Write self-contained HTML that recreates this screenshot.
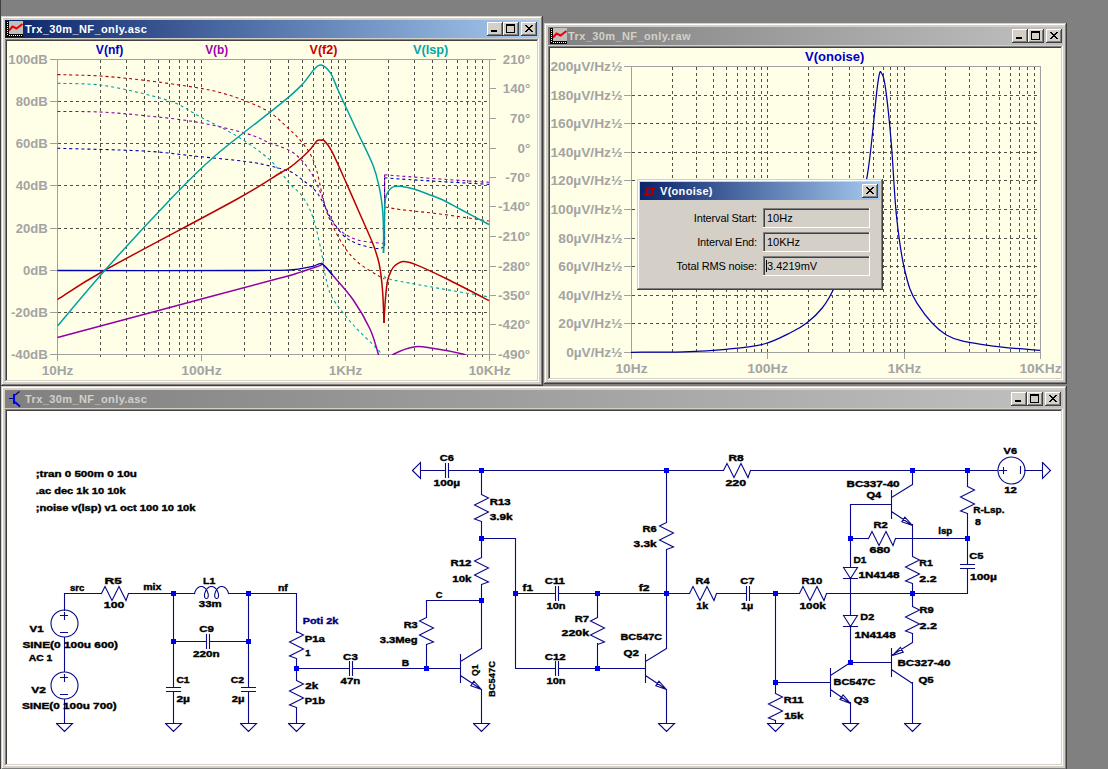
<!DOCTYPE html>
<html><head><meta charset="utf-8"><style>
html,body{margin:0;padding:0;width:1108px;height:769px;overflow:hidden;background:#808080}
svg{display:block}
</style></head><body>
<svg width="1108" height="769" viewBox="0 0 1108 769" shape-rendering="crispEdges">
<rect x="0" y="0" width="1108" height="769" fill="#808080" />
<rect x="0" y="0" width="1" height="769" fill="#404040" />
<rect x="1" y="16" width="542" height="370" fill="#D4D0C8" />
<rect x="1" y="385" width="542" height="1" fill="#404040" />
<rect x="542" y="16" width="1" height="370" fill="#404040" />
<rect x="2" y="384" width="540" height="1" fill="#808080" />
<rect x="541" y="17" width="1" height="368" fill="#808080" />
<rect x="2" y="17" width="539" height="1" fill="#FFFFFF" />
<rect x="2" y="17" width="1" height="367" fill="#FFFFFF" />
<rect x="1" y="16" width="541" height="1" fill="#D4D0C8" />
<rect x="1" y="16" width="1" height="369" fill="#D4D0C8" />
<defs><linearGradient id="g1" x1="0" x2="1" y1="0" y2="0"><stop offset="0" stop-color="#0A246A"/><stop offset="1" stop-color="#A6CAF0"/></linearGradient></defs>
<rect x="5" y="20" width="534" height="18" fill="url(#g1)" />
<rect x="9" y="21" width="14" height="13" fill="#C0C0C0" />
<rect x="6" y="21" width="3" height="16" fill="#000" />
<rect x="6" y="34" width="17" height="3" fill="#000" />
<rect x="7" y="22" width="1" height="1" fill="#FFF" />
<rect x="7" y="24" width="1" height="1" fill="#FFF" />
<rect x="7" y="26" width="1" height="1" fill="#FFF" />
<rect x="7" y="28" width="1" height="1" fill="#FFF" />
<rect x="7" y="30" width="1" height="1" fill="#FFF" />
<rect x="7" y="32" width="1" height="1" fill="#FFF" />
<rect x="7" y="34" width="1" height="1" fill="#FFF" />
<rect x="9" y="35" width="1" height="1" fill="#FFF" />
<rect x="11" y="35" width="1" height="1" fill="#FFF" />
<rect x="13" y="35" width="1" height="1" fill="#FFF" />
<rect x="15" y="35" width="1" height="1" fill="#FFF" />
<rect x="17" y="35" width="1" height="1" fill="#FFF" />
<rect x="19" y="35" width="1" height="1" fill="#FFF" />
<rect x="21" y="35" width="1" height="1" fill="#FFF" />
<path d="M9 30.5 L12.5 26.5 L16.5 28.5 L22.5 24" stroke="#F00000" stroke-width="2" fill="none" shape-rendering="auto"/>
<text x="25" y="33" fill="#FFFFFF" style='font-family:"Liberation Sans",sans-serif;font-weight:bold;font-size:11px;letter-spacing:0.4px'>Trx_30m_NF_only.asc</text>
<rect x="487" y="22" width="16" height="14" fill="#D4D0C8" />
<rect x="487" y="35" width="16" height="1" fill="#404040" />
<rect x="502" y="22" width="1" height="14" fill="#404040" />
<rect x="488" y="34" width="14" height="1" fill="#808080" />
<rect x="501" y="23" width="1" height="12" fill="#808080" />
<rect x="487" y="22" width="15" height="1" fill="#FFFFFF" />
<rect x="487" y="22" width="1" height="13" fill="#FFFFFF" />
<rect x="491" y="30" width="6" height="2" fill="#000" />
<rect x="503" y="22" width="16" height="14" fill="#D4D0C8" />
<rect x="503" y="35" width="16" height="1" fill="#404040" />
<rect x="518" y="22" width="1" height="14" fill="#404040" />
<rect x="504" y="34" width="14" height="1" fill="#808080" />
<rect x="517" y="23" width="1" height="12" fill="#808080" />
<rect x="503" y="22" width="15" height="1" fill="#FFFFFF" />
<rect x="503" y="22" width="1" height="13" fill="#FFFFFF" />
<rect x="506.5" y="24.5" width="8" height="8" fill="none" stroke="#000" stroke-width="1"/>
<rect x="506" y="24" width="9" height="2" fill="#000" />
<rect x="521" y="22" width="16" height="14" fill="#D4D0C8" />
<rect x="521" y="35" width="16" height="1" fill="#404040" />
<rect x="536" y="22" width="1" height="14" fill="#404040" />
<rect x="522" y="34" width="14" height="1" fill="#808080" />
<rect x="535" y="23" width="1" height="12" fill="#808080" />
<rect x="521" y="22" width="15" height="1" fill="#FFFFFF" />
<rect x="521" y="22" width="1" height="13" fill="#FFFFFF" />
<rect x="525" y="25" width="2" height="1" fill="#000" />
<rect x="531" y="25" width="2" height="1" fill="#000" />
<rect x="526" y="26" width="2" height="1" fill="#000" />
<rect x="530" y="26" width="2" height="1" fill="#000" />
<rect x="527" y="27" width="2" height="1" fill="#000" />
<rect x="529" y="27" width="2" height="1" fill="#000" />
<rect x="528" y="28" width="2" height="1" fill="#000" />
<rect x="528" y="28" width="2" height="1" fill="#000" />
<rect x="529" y="29" width="2" height="1" fill="#000" />
<rect x="527" y="29" width="2" height="1" fill="#000" />
<rect x="530" y="30" width="2" height="1" fill="#000" />
<rect x="526" y="30" width="2" height="1" fill="#000" />
<rect x="531" y="31" width="2" height="1" fill="#000" />
<rect x="525" y="31" width="2" height="1" fill="#000" />
<rect x="5" y="39" width="534" height="343" fill="#FFFFE8" />
<rect x="5" y="39" width="534" height="1" fill="#808080" />
<rect x="5" y="39" width="1" height="343" fill="#808080" />
<rect x="6" y="40" width="532" height="1" fill="#404040" />
<rect x="6" y="40" width="1" height="341" fill="#404040" />
<rect x="5" y="381" width="534" height="1" fill="#FFFFFF" />
<rect x="538" y="39" width="1" height="343" fill="#FFFFFF" />
<rect x="6" y="380" width="532" height="1" fill="#D4D0C8" />
<rect x="537" y="40" width="1" height="341" fill="#D4D0C8" />
<rect x="544" y="23" width="523" height="361" fill="#D4D0C8" />
<rect x="544" y="383" width="523" height="1" fill="#404040" />
<rect x="1066" y="23" width="1" height="361" fill="#404040" />
<rect x="545" y="382" width="521" height="1" fill="#808080" />
<rect x="1065" y="24" width="1" height="359" fill="#808080" />
<rect x="545" y="24" width="520" height="1" fill="#FFFFFF" />
<rect x="545" y="24" width="1" height="358" fill="#FFFFFF" />
<rect x="544" y="23" width="522" height="1" fill="#D4D0C8" />
<rect x="544" y="23" width="1" height="360" fill="#D4D0C8" />
<defs><linearGradient id="g2" x1="0" x2="1" y1="0" y2="0"><stop offset="0" stop-color="#808080"/><stop offset="1" stop-color="#C0C0C0"/></linearGradient></defs>
<rect x="548" y="27" width="515" height="18" fill="url(#g2)" />
<rect x="553" y="28" width="14" height="13" fill="#C0C0C0" />
<rect x="550" y="28" width="3" height="16" fill="#000" />
<rect x="550" y="41" width="17" height="3" fill="#000" />
<rect x="551" y="29" width="1" height="1" fill="#FFF" />
<rect x="551" y="31" width="1" height="1" fill="#FFF" />
<rect x="551" y="33" width="1" height="1" fill="#FFF" />
<rect x="551" y="35" width="1" height="1" fill="#FFF" />
<rect x="551" y="37" width="1" height="1" fill="#FFF" />
<rect x="551" y="39" width="1" height="1" fill="#FFF" />
<rect x="551" y="41" width="1" height="1" fill="#FFF" />
<rect x="553" y="42" width="1" height="1" fill="#FFF" />
<rect x="555" y="42" width="1" height="1" fill="#FFF" />
<rect x="557" y="42" width="1" height="1" fill="#FFF" />
<rect x="559" y="42" width="1" height="1" fill="#FFF" />
<rect x="561" y="42" width="1" height="1" fill="#FFF" />
<rect x="563" y="42" width="1" height="1" fill="#FFF" />
<rect x="565" y="42" width="1" height="1" fill="#FFF" />
<path d="M553 37.5 L556.5 33.5 L560.5 35.5 L566.5 31" stroke="#F00000" stroke-width="2" fill="none" shape-rendering="auto"/>
<text x="568" y="40" fill="#D4D0C8" style='font-family:"Liberation Sans",sans-serif;font-weight:bold;font-size:11px;letter-spacing:0.4px'>Trx_30m_NF_only.raw</text>
<rect x="1012" y="29" width="16" height="14" fill="#D4D0C8" />
<rect x="1012" y="42" width="16" height="1" fill="#404040" />
<rect x="1027" y="29" width="1" height="14" fill="#404040" />
<rect x="1013" y="41" width="14" height="1" fill="#808080" />
<rect x="1026" y="30" width="1" height="12" fill="#808080" />
<rect x="1012" y="29" width="15" height="1" fill="#FFFFFF" />
<rect x="1012" y="29" width="1" height="13" fill="#FFFFFF" />
<rect x="1016" y="37" width="6" height="2" fill="#000" />
<rect x="1028" y="29" width="16" height="14" fill="#D4D0C8" />
<rect x="1028" y="42" width="16" height="1" fill="#404040" />
<rect x="1043" y="29" width="1" height="14" fill="#404040" />
<rect x="1029" y="41" width="14" height="1" fill="#808080" />
<rect x="1042" y="30" width="1" height="12" fill="#808080" />
<rect x="1028" y="29" width="15" height="1" fill="#FFFFFF" />
<rect x="1028" y="29" width="1" height="13" fill="#FFFFFF" />
<rect x="1031.5" y="31.5" width="8" height="8" fill="none" stroke="#000" stroke-width="1"/>
<rect x="1031" y="31" width="9" height="2" fill="#000" />
<rect x="1046" y="29" width="16" height="14" fill="#D4D0C8" />
<rect x="1046" y="42" width="16" height="1" fill="#404040" />
<rect x="1061" y="29" width="1" height="14" fill="#404040" />
<rect x="1047" y="41" width="14" height="1" fill="#808080" />
<rect x="1060" y="30" width="1" height="12" fill="#808080" />
<rect x="1046" y="29" width="15" height="1" fill="#FFFFFF" />
<rect x="1046" y="29" width="1" height="13" fill="#FFFFFF" />
<rect x="1050" y="32" width="2" height="1" fill="#000" />
<rect x="1056" y="32" width="2" height="1" fill="#000" />
<rect x="1051" y="33" width="2" height="1" fill="#000" />
<rect x="1055" y="33" width="2" height="1" fill="#000" />
<rect x="1052" y="34" width="2" height="1" fill="#000" />
<rect x="1054" y="34" width="2" height="1" fill="#000" />
<rect x="1053" y="35" width="2" height="1" fill="#000" />
<rect x="1053" y="35" width="2" height="1" fill="#000" />
<rect x="1054" y="36" width="2" height="1" fill="#000" />
<rect x="1052" y="36" width="2" height="1" fill="#000" />
<rect x="1055" y="37" width="2" height="1" fill="#000" />
<rect x="1051" y="37" width="2" height="1" fill="#000" />
<rect x="1056" y="38" width="2" height="1" fill="#000" />
<rect x="1050" y="38" width="2" height="1" fill="#000" />
<rect x="548" y="46" width="515" height="334" fill="#FFFFE8" />
<rect x="548" y="46" width="515" height="1" fill="#808080" />
<rect x="548" y="46" width="1" height="334" fill="#808080" />
<rect x="549" y="47" width="513" height="1" fill="#404040" />
<rect x="549" y="47" width="1" height="332" fill="#404040" />
<rect x="548" y="379" width="515" height="1" fill="#FFFFFF" />
<rect x="1062" y="46" width="1" height="334" fill="#FFFFFF" />
<rect x="549" y="378" width="513" height="1" fill="#D4D0C8" />
<rect x="1061" y="47" width="1" height="332" fill="#D4D0C8" />
<rect x="1" y="386" width="1066" height="384" fill="#D4D0C8" />
<rect x="1" y="769" width="1066" height="1" fill="#404040" />
<rect x="1066" y="386" width="1" height="384" fill="#404040" />
<rect x="2" y="768" width="1064" height="1" fill="#808080" />
<rect x="1065" y="387" width="1" height="382" fill="#808080" />
<rect x="2" y="387" width="1063" height="1" fill="#FFFFFF" />
<rect x="2" y="387" width="1" height="381" fill="#FFFFFF" />
<rect x="1" y="386" width="1065" height="1" fill="#D4D0C8" />
<rect x="1" y="386" width="1" height="383" fill="#D4D0C8" />
<defs><linearGradient id="g3" x1="0" x2="1" y1="0" y2="0"><stop offset="0" stop-color="#808080"/><stop offset="1" stop-color="#C0C0C0"/></linearGradient></defs>
<rect x="5" y="390" width="1058" height="18" fill="url(#g3)" />
<rect x="13" y="394" width="2" height="10" fill="#0000F0" />
<rect x="9" y="398" width="4" height="1" fill="#000090" />
<path d="M15 395 L19.5 391.5" stroke="#000080" stroke-width="1.2" fill="none" shape-rendering="auto"/>
<path d="M15 402 L20 406.5" stroke="#0000E0" stroke-width="1.8" fill="none" shape-rendering="auto"/>
<text x="25" y="403" fill="#D4D0C8" style='font-family:"Liberation Sans",sans-serif;font-weight:bold;font-size:11px;letter-spacing:0.4px'>Trx_30m_NF_only.asc</text>
<rect x="1011" y="392" width="16" height="14" fill="#D4D0C8" />
<rect x="1011" y="405" width="16" height="1" fill="#404040" />
<rect x="1026" y="392" width="1" height="14" fill="#404040" />
<rect x="1012" y="404" width="14" height="1" fill="#808080" />
<rect x="1025" y="393" width="1" height="12" fill="#808080" />
<rect x="1011" y="392" width="15" height="1" fill="#FFFFFF" />
<rect x="1011" y="392" width="1" height="13" fill="#FFFFFF" />
<rect x="1015" y="400" width="6" height="2" fill="#000" />
<rect x="1027" y="392" width="16" height="14" fill="#D4D0C8" />
<rect x="1027" y="405" width="16" height="1" fill="#404040" />
<rect x="1042" y="392" width="1" height="14" fill="#404040" />
<rect x="1028" y="404" width="14" height="1" fill="#808080" />
<rect x="1041" y="393" width="1" height="12" fill="#808080" />
<rect x="1027" y="392" width="15" height="1" fill="#FFFFFF" />
<rect x="1027" y="392" width="1" height="13" fill="#FFFFFF" />
<rect x="1030.5" y="394.5" width="8" height="8" fill="none" stroke="#000" stroke-width="1"/>
<rect x="1030" y="394" width="9" height="2" fill="#000" />
<rect x="1045" y="392" width="16" height="14" fill="#D4D0C8" />
<rect x="1045" y="405" width="16" height="1" fill="#404040" />
<rect x="1060" y="392" width="1" height="14" fill="#404040" />
<rect x="1046" y="404" width="14" height="1" fill="#808080" />
<rect x="1059" y="393" width="1" height="12" fill="#808080" />
<rect x="1045" y="392" width="15" height="1" fill="#FFFFFF" />
<rect x="1045" y="392" width="1" height="13" fill="#FFFFFF" />
<rect x="1049" y="395" width="2" height="1" fill="#000" />
<rect x="1055" y="395" width="2" height="1" fill="#000" />
<rect x="1050" y="396" width="2" height="1" fill="#000" />
<rect x="1054" y="396" width="2" height="1" fill="#000" />
<rect x="1051" y="397" width="2" height="1" fill="#000" />
<rect x="1053" y="397" width="2" height="1" fill="#000" />
<rect x="1052" y="398" width="2" height="1" fill="#000" />
<rect x="1052" y="398" width="2" height="1" fill="#000" />
<rect x="1053" y="399" width="2" height="1" fill="#000" />
<rect x="1051" y="399" width="2" height="1" fill="#000" />
<rect x="1054" y="400" width="2" height="1" fill="#000" />
<rect x="1050" y="400" width="2" height="1" fill="#000" />
<rect x="1055" y="401" width="2" height="1" fill="#000" />
<rect x="1049" y="401" width="2" height="1" fill="#000" />
<rect x="5" y="409" width="1058" height="357" fill="#FFFFFF" />
<rect x="5" y="409" width="1058" height="1" fill="#808080" />
<rect x="5" y="409" width="1" height="357" fill="#808080" />
<rect x="6" y="410" width="1056" height="1" fill="#404040" />
<rect x="6" y="410" width="1" height="355" fill="#404040" />
<rect x="5" y="765" width="1058" height="1" fill="#FFFFFF" />
<rect x="1062" y="409" width="1" height="357" fill="#FFFFFF" />
<rect x="6" y="764" width="1056" height="1" fill="#D4D0C8" />
<rect x="1061" y="410" width="1" height="355" fill="#D4D0C8" />
<path d="M100.5 60V357M126.5 60V357M144.5 60V357M158.5 60V357M169.5 60V357M179.5 60V357M187.5 60V357M194.5 60V357M201.5 60V357M244.5 60V357M270.5 60V357M288.5 60V357M302.5 60V357M313.5 60V357M323.5 60V357M331.5 60V357M338.5 60V357M345.5 60V357M388.5 60V357M414.5 60V357M432.5 60V357M446.5 60V357M457.5 60V357M467.5 60V357M475.5 60V357M482.5 60V357" stroke="#505048" stroke-width="1" stroke-dasharray="3 3" fill="none"/>
<path d="M58 101.5H489M58 143.5H489M58 185.5H489M58 228.5H489M58 270.5H489M58 312.5H489" stroke="#505048" stroke-width="1" stroke-dasharray="3 3" fill="none"/>
<path d="M57.5 59.5H489.5V354.5H57.5Z" stroke="#A0A0A0" fill="none" stroke-width="1"/>
<text x="8.350000000000001" y="64.0" fill="#A4A4A4" text-anchor="start" textLength="39.4" lengthAdjust="spacingAndGlyphs" style='font-family:"Liberation Sans",sans-serif;font-weight:bold;font-size:13px;'>100dB</text>
<text x="15.700000000000003" y="106.0" fill="#A4A4A4" text-anchor="start" textLength="32.1" lengthAdjust="spacingAndGlyphs" style='font-family:"Liberation Sans",sans-serif;font-weight:bold;font-size:13px;'>80dB</text>
<text x="15.700000000000003" y="148.0" fill="#A4A4A4" text-anchor="start" textLength="32.1" lengthAdjust="spacingAndGlyphs" style='font-family:"Liberation Sans",sans-serif;font-weight:bold;font-size:13px;'>60dB</text>
<text x="15.700000000000003" y="190.0" fill="#A4A4A4" text-anchor="start" textLength="32.1" lengthAdjust="spacingAndGlyphs" style='font-family:"Liberation Sans",sans-serif;font-weight:bold;font-size:13px;'>40dB</text>
<text x="15.700000000000003" y="233.0" fill="#A4A4A4" text-anchor="start" textLength="32.1" lengthAdjust="spacingAndGlyphs" style='font-family:"Liberation Sans",sans-serif;font-weight:bold;font-size:13px;'>20dB</text>
<text x="23.049999999999997" y="275.0" fill="#A4A4A4" text-anchor="start" textLength="24.8" lengthAdjust="spacingAndGlyphs" style='font-family:"Liberation Sans",sans-serif;font-weight:bold;font-size:13px;'>0dB</text>
<text x="10.900000000000006" y="317.0" fill="#A4A4A4" text-anchor="start" textLength="36.9" lengthAdjust="spacingAndGlyphs" style='font-family:"Liberation Sans",sans-serif;font-weight:bold;font-size:13px;'>-20dB</text>
<text x="10.900000000000006" y="359.0" fill="#A4A4A4" text-anchor="start" textLength="36.9" lengthAdjust="spacingAndGlyphs" style='font-family:"Liberation Sans",sans-serif;font-weight:bold;font-size:13px;'>-40dB</text>
<text x="502.74999999999994" y="64.0" fill="#A4A4A4" text-anchor="start" textLength="27.5" lengthAdjust="spacingAndGlyphs" style='font-family:"Liberation Sans",sans-serif;font-weight:bold;font-size:13px;'>210°</text>
<text x="502.74999999999994" y="93.0" fill="#A4A4A4" text-anchor="start" textLength="27.5" lengthAdjust="spacingAndGlyphs" style='font-family:"Liberation Sans",sans-serif;font-weight:bold;font-size:13px;'>140°</text>
<text x="510.09999999999997" y="123.0" fill="#A4A4A4" text-anchor="start" textLength="20.2" lengthAdjust="spacingAndGlyphs" style='font-family:"Liberation Sans",sans-serif;font-weight:bold;font-size:13px;'>70°</text>
<text x="517.4499999999999" y="153.0" fill="#A4A4A4" text-anchor="start" textLength="12.8" lengthAdjust="spacingAndGlyphs" style='font-family:"Liberation Sans",sans-serif;font-weight:bold;font-size:13px;'>0°</text>
<text x="505.29999999999995" y="182.0" fill="#A4A4A4" text-anchor="start" textLength="25.0" lengthAdjust="spacingAndGlyphs" style='font-family:"Liberation Sans",sans-serif;font-weight:bold;font-size:13px;'>-70°</text>
<text x="497.94999999999993" y="211.0" fill="#A4A4A4" text-anchor="start" textLength="32.3" lengthAdjust="spacingAndGlyphs" style='font-family:"Liberation Sans",sans-serif;font-weight:bold;font-size:13px;'>-140°</text>
<text x="497.94999999999993" y="241.0" fill="#A4A4A4" text-anchor="start" textLength="32.3" lengthAdjust="spacingAndGlyphs" style='font-family:"Liberation Sans",sans-serif;font-weight:bold;font-size:13px;'>-210°</text>
<text x="497.94999999999993" y="271.0" fill="#A4A4A4" text-anchor="start" textLength="32.3" lengthAdjust="spacingAndGlyphs" style='font-family:"Liberation Sans",sans-serif;font-weight:bold;font-size:13px;'>-280°</text>
<text x="497.94999999999993" y="300.0" fill="#A4A4A4" text-anchor="start" textLength="32.3" lengthAdjust="spacingAndGlyphs" style='font-family:"Liberation Sans",sans-serif;font-weight:bold;font-size:13px;'>-350°</text>
<text x="497.94999999999993" y="329.0" fill="#A4A4A4" text-anchor="start" textLength="32.3" lengthAdjust="spacingAndGlyphs" style='font-family:"Liberation Sans",sans-serif;font-weight:bold;font-size:13px;'>-420°</text>
<text x="497.94999999999993" y="359.0" fill="#A4A4A4" text-anchor="start" textLength="32.3" lengthAdjust="spacingAndGlyphs" style='font-family:"Liberation Sans",sans-serif;font-weight:bold;font-size:13px;'>-490°</text>
<text x="41.65" y="375" fill="#A4A4A4" text-anchor="start" textLength="31.7" lengthAdjust="spacingAndGlyphs" style='font-family:"Liberation Sans",sans-serif;font-weight:bold;font-size:13px;'>10Hz</text>
<text x="181.3" y="375" fill="#A4A4A4" text-anchor="start" textLength="40.4" lengthAdjust="spacingAndGlyphs" style='font-family:"Liberation Sans",sans-serif;font-weight:bold;font-size:13px;'>100Hz</text>
<text x="328.8" y="375" fill="#A4A4A4" text-anchor="start" textLength="33.4" lengthAdjust="spacingAndGlyphs" style='font-family:"Liberation Sans",sans-serif;font-weight:bold;font-size:13px;'>1KHz</text>
<text x="468.4" y="375" fill="#A4A4A4" text-anchor="start" textLength="42.2" lengthAdjust="spacingAndGlyphs" style='font-family:"Liberation Sans",sans-serif;font-weight:bold;font-size:13px;'>10KHz</text>
<path d="M50 59.5H57M50 101.5H57M50 143.5H57M50 185.5H57M50 228.5H57M50 270.5H57M50 312.5H57M50 354.5H57M489 59.5H496M489 88.5H496M489 118.5H496M489 148.5H496M489 177.5H496M489 206.5H496M489 236.5H496M489 266.5H496M489 295.5H496M489 324.5H496M489 354.5H496M57.5 354V361M201.5 354V361M345.5 354V361M489.5 354V361" stroke="#A0A0A0" stroke-width="1" fill="none"/>
<text x="95.8" y="54" fill="#0000C8" text-anchor="start" textLength="27.6" lengthAdjust="spacingAndGlyphs" style='font-family:"Liberation Sans",sans-serif;font-weight:bold;font-size:12.5px;'>V(nf)</text>
<text x="205.2" y="54" fill="#A000B0" text-anchor="start" textLength="23.0" lengthAdjust="spacingAndGlyphs" style='font-family:"Liberation Sans",sans-serif;font-weight:bold;font-size:12.5px;'>V(b)</text>
<text x="309.6" y="54" fill="#C80000" text-anchor="start" textLength="27.8" lengthAdjust="spacingAndGlyphs" style='font-family:"Liberation Sans",sans-serif;font-weight:bold;font-size:12.5px;'>V(f2)</text>
<text x="412.9" y="54" fill="#00A8A8" text-anchor="start" textLength="35.5" lengthAdjust="spacingAndGlyphs" style='font-family:"Liberation Sans",sans-serif;font-weight:bold;font-size:12.5px;'>V(lsp)</text>
<path d="M672.5 67V355M696.5 67V355M713.5 67V355M726.5 67V355M737.5 67V355M746.5 67V355M754.5 67V355M761.5 67V355M767.5 67V355M808.5 67V355M832.5 67V355M849.5 67V355M863.5 67V355M873.5 67V355M883.5 67V355M890.5 67V355M897.5 67V355M904.5 67V355M945.5 67V355M969.5 67V355M986.5 67V355M999.5 67V355M1010.5 67V355M1019.5 67V355M1027.5 67V355M1034.5 67V355" stroke="#505048" stroke-width="1" stroke-dasharray="3 3" fill="none"/>
<path d="M632 95.5H1040M632 123.5H1040M632 152.5H1040M632 180.5H1040M632 209.5H1040M632 238.5H1040M632 266.5H1040M632 295.5H1040M632 323.5H1040" stroke="#505048" stroke-width="1" stroke-dasharray="3 3" fill="none"/>
<path d="M631.5 66.5H1040.5V352.5H631.5Z" stroke="#A0A0A0" fill="none" stroke-width="1"/>
<text x="550.4" y="71.0" fill="#A4A4A4" text-anchor="start" textLength="72.0" lengthAdjust="spacingAndGlyphs" style='font-family:"Liberation Sans",sans-serif;font-weight:bold;font-size:13px;'>200µV/Hz½</text>
<text x="550.4" y="100.0" fill="#A4A4A4" text-anchor="start" textLength="72.0" lengthAdjust="spacingAndGlyphs" style='font-family:"Liberation Sans",sans-serif;font-weight:bold;font-size:13px;'>180µV/Hz½</text>
<text x="550.4" y="128.0" fill="#A4A4A4" text-anchor="start" textLength="72.0" lengthAdjust="spacingAndGlyphs" style='font-family:"Liberation Sans",sans-serif;font-weight:bold;font-size:13px;'>160µV/Hz½</text>
<text x="550.4" y="157.0" fill="#A4A4A4" text-anchor="start" textLength="72.0" lengthAdjust="spacingAndGlyphs" style='font-family:"Liberation Sans",sans-serif;font-weight:bold;font-size:13px;'>140µV/Hz½</text>
<text x="550.4" y="185.0" fill="#A4A4A4" text-anchor="start" textLength="72.0" lengthAdjust="spacingAndGlyphs" style='font-family:"Liberation Sans",sans-serif;font-weight:bold;font-size:13px;'>120µV/Hz½</text>
<text x="550.4" y="214.0" fill="#A4A4A4" text-anchor="start" textLength="72.0" lengthAdjust="spacingAndGlyphs" style='font-family:"Liberation Sans",sans-serif;font-weight:bold;font-size:13px;'>100µV/Hz½</text>
<text x="558.3" y="243.0" fill="#A4A4A4" text-anchor="start" textLength="64.1" lengthAdjust="spacingAndGlyphs" style='font-family:"Liberation Sans",sans-serif;font-weight:bold;font-size:13px;'>80µV/Hz½</text>
<text x="558.3" y="271.0" fill="#A4A4A4" text-anchor="start" textLength="64.1" lengthAdjust="spacingAndGlyphs" style='font-family:"Liberation Sans",sans-serif;font-weight:bold;font-size:13px;'>60µV/Hz½</text>
<text x="558.3" y="300.0" fill="#A4A4A4" text-anchor="start" textLength="64.1" lengthAdjust="spacingAndGlyphs" style='font-family:"Liberation Sans",sans-serif;font-weight:bold;font-size:13px;'>40µV/Hz½</text>
<text x="558.3" y="328.0" fill="#A4A4A4" text-anchor="start" textLength="64.1" lengthAdjust="spacingAndGlyphs" style='font-family:"Liberation Sans",sans-serif;font-weight:bold;font-size:13px;'>20µV/Hz½</text>
<text x="566.1999999999999" y="357.0" fill="#A4A4A4" text-anchor="start" textLength="56.2" lengthAdjust="spacingAndGlyphs" style='font-family:"Liberation Sans",sans-serif;font-weight:bold;font-size:13px;'>0µV/Hz½</text>
<text x="615.4" y="373" fill="#A4A4A4" text-anchor="start" textLength="32.2" lengthAdjust="spacingAndGlyphs" style='font-family:"Liberation Sans",sans-serif;font-weight:bold;font-size:13px;'>10Hz</text>
<text x="747.3" y="373" fill="#A4A4A4" text-anchor="start" textLength="40.4" lengthAdjust="spacingAndGlyphs" style='font-family:"Liberation Sans",sans-serif;font-weight:bold;font-size:13px;'>100Hz</text>
<text x="887.8" y="373" fill="#A4A4A4" text-anchor="start" textLength="33.4" lengthAdjust="spacingAndGlyphs" style='font-family:"Liberation Sans",sans-serif;font-weight:bold;font-size:13px;'>1KHz</text>
<text x="1019.4" y="373" fill="#A4A4A4" text-anchor="start" textLength="42.2" lengthAdjust="spacingAndGlyphs" style='font-family:"Liberation Sans",sans-serif;font-weight:bold;font-size:13px;'>10KHz</text>
<path d="M624 66.5H631M624 95.5H631M624 123.5H631M624 152.5H631M624 180.5H631M624 209.5H631M624 238.5H631M624 266.5H631M624 295.5H631M624 323.5H631M624 352.5H631M631.5 352V359M767.5 352V359M904.5 352V359M1040.5 352V359" stroke="#A0A0A0" stroke-width="1" fill="none"/>
<text x="805.1" y="60.5" fill="#0000C8" text-anchor="start" textLength="59.3" lengthAdjust="spacingAndGlyphs" style='font-family:"Liberation Sans",sans-serif;font-weight:bold;font-size:12.5px;'>V(onoise)</text>
<clipPath id="cp1"><rect x="57" y="59" width="433" height="296"/></clipPath>
<g clip-path="url(#cp1)">
<path d="M57.5 74.6 C64.6 74.8 85.6 75.1 100.0 76.0 C114.4 76.9 127.8 78.3 143.8 80.2 C159.7 82.1 183.0 85.4 195.8 87.5 C208.6 89.6 212.5 90.5 220.8 92.7 C229.1 95.0 237.6 97.7 245.8 101.0 C254.0 104.3 262.6 107.7 270.0 112.5 C277.4 117.3 284.9 125.3 290.0 130.0 C295.1 134.7 296.9 136.2 300.4 140.4 C303.9 144.6 308.0 149.8 310.8 155.0 C313.6 160.2 315.3 165.7 317.0 171.6 C318.7 177.5 319.8 184.4 321.2 190.3 C322.6 196.2 323.6 201.4 325.3 207.0 C327.0 212.6 328.5 217.0 331.6 223.6 C334.7 230.2 339.5 239.8 344.0 246.4 C348.5 253.0 352.4 257.8 358.6 263.0 C364.9 268.2 377.3 275.1 381.5 277.6 C385.7 280.1 383.6 277.9 384.0 278.0" stroke="#B80000" stroke-width="1.1" fill="none" stroke-dasharray="3 3" shape-rendering="auto" stroke-linejoin="round"/>
<path d="M385.6 207.0 C388.0 207.4 390.9 208.3 400.0 209.5 C409.1 210.7 425.2 212.1 440.0 214.0 C454.8 215.9 480.8 219.8 489.0 221.0" stroke="#B80000" stroke-width="1.1" fill="none" stroke-dasharray="3 3" shape-rendering="auto" stroke-linejoin="round"/>
<path d="M57.5 83.3 C64.6 83.6 85.6 83.3 100.0 85.0 C114.4 86.7 131.2 90.8 143.8 93.8 C156.2 96.8 165.6 99.2 175.0 103.0 C184.4 106.8 189.6 111.1 200.0 116.7 C210.4 122.3 225.8 129.3 237.5 136.5 C249.2 143.7 261.2 152.1 270.0 160.0 C278.8 167.9 284.6 177.9 290.0 184.0 C295.4 190.1 298.7 190.9 302.5 196.5 C306.3 202.1 309.8 208.3 312.9 217.3 C316.0 226.3 319.1 240.9 321.2 250.6 C323.3 260.3 323.4 267.6 325.3 275.5 C327.2 283.4 327.8 289.8 332.5 298.0 C337.2 306.2 345.7 316.3 353.3 325.0 C360.9 333.7 373.4 344.5 378.3 350.0 C383.2 355.5 382.2 356.7 383.0 358.0" stroke="#00A0A0" stroke-width="1.1" fill="none" stroke-dasharray="3 3" shape-rendering="auto" stroke-linejoin="round"/>
<path d="M384.5 276.0 C385.2 276.5 382.8 277.5 388.8 279.0 C394.7 280.5 403.3 282.0 420.0 285.0 C436.7 288.0 477.5 295.0 489.0 297.0" stroke="#00A0A0" stroke-width="1.1" fill="none" stroke-dasharray="3 3" shape-rendering="auto" stroke-linejoin="round"/>
<path d="M57.5 111.5 C64.6 111.6 85.6 111.3 100.0 112.0 C114.4 112.7 127.8 113.9 143.8 115.6 C159.7 117.2 178.8 119.0 195.8 121.9 C212.8 124.9 233.4 129.8 245.8 133.3 C258.2 136.8 262.6 140.1 270.0 143.0 C277.4 145.9 284.6 147.8 290.0 150.8 C295.4 153.8 298.7 157.0 302.5 161.2 C306.3 165.3 309.8 170.2 312.9 175.7 C316.0 181.2 318.4 187.5 321.2 194.4 C324.0 201.3 326.0 211.1 329.5 217.3 C333.0 223.6 337.1 228.1 342.0 231.9 C346.9 235.7 351.9 238.3 358.6 240.2 C365.4 242.1 378.2 242.8 382.5 243.3 C386.8 243.8 384.2 243.3 384.6 243.3" stroke="#9000A8" stroke-width="1.1" fill="none" stroke-dasharray="3 3" shape-rendering="auto" stroke-linejoin="round"/>
<path d="M384.6 243.3 L384.6 174.7" stroke="#9000A8" stroke-width="1.1" fill="none" stroke-dasharray="3 3" shape-rendering="auto" stroke-linejoin="round"/>
<path d="M384.6 174.7 C387.2 174.9 390.8 175.3 400.0 176.0 C409.2 176.7 425.2 177.9 440.0 179.0 C454.8 180.1 480.8 181.8 489.0 182.3" stroke="#9000A8" stroke-width="1.1" fill="none" stroke-dasharray="3 3" shape-rendering="auto" stroke-linejoin="round"/>
<path d="M57.5 148.3 C71.9 148.8 120.7 149.7 143.8 151.0 C166.8 152.3 178.8 154.5 195.8 156.2 C212.8 158.0 233.4 159.9 245.8 161.5 C258.2 163.1 262.6 164.3 270.0 166.0 C277.4 167.7 284.6 169.3 290.0 171.6 C295.4 173.9 298.3 176.9 302.5 180.0 C306.7 183.1 311.5 186.5 315.0 190.3 C318.5 194.1 320.5 198.0 323.3 202.8 C326.1 207.7 328.2 213.9 331.6 219.4 C335.1 224.9 339.5 231.8 344.0 236.0 C348.5 240.2 353.1 242.2 358.6 244.3 C364.2 246.4 373.3 248.0 377.3 248.5 C381.3 249.0 381.3 247.9 382.5 247.5 C383.7 247.1 384.2 246.2 384.6 246.0" stroke="#0000B4" stroke-width="1.1" fill="none" stroke-dasharray="3 3" shape-rendering="auto" stroke-linejoin="round"/>
<path d="M384.6 246.0 L384.6 177.8" stroke="#0000B4" stroke-width="1.1" fill="none" stroke-dasharray="3 3" shape-rendering="auto" stroke-linejoin="round"/>
<path d="M384.6 177.8 C387.2 178.0 390.8 178.4 400.0 179.0 C409.2 179.6 425.2 180.6 440.0 181.5 C454.8 182.4 480.8 183.9 489.0 184.4" stroke="#0000B4" stroke-width="1.1" fill="none" stroke-dasharray="3 3" shape-rendering="auto" stroke-linejoin="round"/>
<path d="M57.5 337.5 C75.9 332.6 130.9 317.9 168.0 308.0 C205.1 298.1 259.9 283.4 280.2 278.0 C300.5 272.6 286.5 276.5 290.0 275.5 C293.5 274.5 296.2 273.5 301.2 271.9 C306.2 270.2 316.5 266.9 320.0 265.6 C323.5 264.3 320.1 262.4 322.2 264.0 C324.3 265.6 327.3 269.0 332.5 275.0 C337.7 281.0 347.1 291.0 353.3 300.0 C359.6 309.0 365.8 320.0 370.0 329.0 C374.2 338.0 376.6 348.8 378.3 354.0 C380.0 359.2 379.7 359.0 380.0 360.0" stroke="#9000A8" stroke-width="1.5" fill="none" shape-rendering="auto" stroke-linejoin="round"/>
<path d="M392.0 358.0 C392.3 357.3 390.4 355.9 394.0 354.0 C397.6 352.1 407.3 347.8 413.8 346.9 C420.2 345.9 424.3 347.1 432.5 348.3 C440.7 349.5 457.3 352.7 462.7 354.0 C468.1 355.3 464.6 355.7 465.0 356.0" stroke="#9000A8" stroke-width="1.5" fill="none" shape-rendering="auto" stroke-linejoin="round"/>
<path d="M57.5 270.5 C89.6 270.5 211.2 270.6 250.0 270.5 C288.8 270.4 279.7 270.6 290.0 270.0 C300.3 269.4 306.3 267.6 311.7 266.6 C317.1 265.6 318.7 262.6 322.2 264.0 C325.7 265.4 330.8 273.2 332.5 275.0" stroke="#0000B4" stroke-width="1.3" fill="none" shape-rendering="auto" stroke-linejoin="round"/>
<path d="M57.5 299.6 C65.5 294.7 75.5 286.6 105.2 270.0 C134.8 253.4 206.2 216.2 235.4 200.0 C264.6 183.8 271.1 178.4 280.2 173.0 C289.3 167.6 286.3 170.1 290.0 167.4 C293.7 164.7 299.0 160.1 302.5 157.0 C306.0 153.9 308.4 151.4 310.8 148.7 C313.2 146.0 315.3 142.2 317.0 140.8 C318.7 139.4 319.8 140.2 321.0 140.2 C322.2 140.2 322.5 139.0 324.3 140.8 C326.1 142.6 328.3 144.6 331.6 150.8 C334.9 157.0 339.5 167.8 344.0 177.8 C348.5 187.8 353.8 200.0 358.6 211.0 C363.4 222.0 369.5 235.0 373.0 244.0 C376.5 253.0 377.8 257.3 379.4 265.0 C381.0 272.7 381.7 280.3 382.5 290.0 C383.3 299.7 383.8 317.5 384.0 323.0" stroke="#B80000" stroke-width="1.5" fill="none" shape-rendering="auto" stroke-linejoin="round"/>
<path d="M384.0 323.0 C384.2 318.8 384.9 305.0 385.5 298.0 C386.1 291.0 386.6 285.5 387.5 281.0 C388.4 276.5 389.8 273.6 391.0 271.0 C392.2 268.4 392.9 267.1 395.0 265.5 C397.1 263.9 399.8 261.6 403.3 261.5 C406.8 261.4 408.5 261.7 415.8 264.6 C423.1 267.5 434.8 273.0 447.0 279.0 C459.2 285.0 482.0 296.9 489.0 300.5" stroke="#B80000" stroke-width="1.5" fill="none" shape-rendering="auto" stroke-linejoin="round"/>
<path d="M57.5 326.0 C65.5 316.7 86.5 291.0 105.2 270.0 C123.9 249.0 151.6 219.0 169.8 200.0 C188.0 181.0 196.2 172.2 214.6 156.2 C233.0 140.3 265.8 116.0 280.2 104.2 C294.6 92.4 295.7 91.1 301.3 85.4 C306.9 79.7 310.5 73.2 313.8 69.8 C317.0 66.4 318.2 64.5 321.0 65.0 C323.8 65.5 327.4 68.5 330.4 72.9 C333.4 77.4 334.4 82.2 338.8 91.7 C343.1 101.2 350.8 117.7 356.5 130.0 C362.2 142.3 369.2 155.6 373.0 165.3 C376.8 175.0 377.8 180.9 379.4 188.2 C381.0 195.5 381.8 202.0 382.5 209.0 C383.2 216.0 383.3 222.7 383.5 230.0 C383.7 237.3 383.5 249.2 383.5 253.0" stroke="#00A0A0" stroke-width="1.5" fill="none" shape-rendering="auto" stroke-linejoin="round"/>
<path d="M383.5 253.0 C383.6 248.3 383.8 234.2 384.2 225.0 C384.6 215.8 384.3 204.2 385.6 198.0 C386.9 191.8 389.5 189.4 391.9 187.5 C394.3 185.6 396.4 186.1 400.0 186.3 C403.6 186.6 408.3 187.4 413.8 189.0 C419.2 190.6 427.6 194.0 432.5 195.8 C437.4 197.6 438.1 197.6 443.0 200.0 C447.9 202.4 454.0 205.9 461.7 210.0 C469.4 214.1 484.4 222.1 489.0 224.5" stroke="#00A0A0" stroke-width="1.5" fill="none" shape-rendering="auto" stroke-linejoin="round"/>
</g>
<clipPath id="cp2"><rect x="631" y="66" width="410" height="287"/></clipPath>
<g clip-path="url(#cp2)">
<path d="M631.0 352.3 C639.7 352.2 667.4 352.3 683.2 351.8 C699.0 351.3 712.5 350.6 726.0 349.3 C739.5 348.0 753.0 346.9 764.0 344.0 C775.0 341.1 784.6 335.5 791.8 332.0 C799.0 328.5 801.9 326.8 807.0 322.8 C812.1 318.8 817.8 313.6 822.2 308.0 C826.6 302.4 828.9 298.9 833.5 289.2 C838.1 279.5 844.4 269.1 850.0 250.0 C855.6 230.9 862.8 202.6 867.4 174.8 C872.0 147.0 875.3 100.2 877.8 83.3 C880.2 66.4 880.5 72.3 881.9 73.7 C883.3 75.1 884.4 79.6 886.0 91.6 C887.6 103.6 889.8 125.0 891.5 145.7 C893.2 166.4 894.3 195.2 896.5 216.0 C898.7 236.8 901.3 255.9 904.8 270.5 C908.3 285.1 910.4 292.9 917.3 303.7 C924.2 314.4 934.6 328.1 946.4 335.0 C958.2 341.9 972.4 342.8 988.0 345.3 C1003.6 347.9 1031.3 349.5 1040.0 350.3" stroke="#0000A8" stroke-width="1.25" fill="none" shape-rendering="auto" stroke-linejoin="round"/>
</g>
<rect x="637" y="179" width="246" height="111" fill="#D4D0C8" />
<rect x="637" y="289" width="246" height="1" fill="#404040" />
<rect x="882" y="179" width="1" height="111" fill="#404040" />
<rect x="638" y="288" width="244" height="1" fill="#808080" />
<rect x="881" y="180" width="1" height="109" fill="#808080" />
<rect x="638" y="180" width="243" height="1" fill="#FFFFFF" />
<rect x="638" y="180" width="1" height="108" fill="#FFFFFF" />
<defs><linearGradient id="gd" x1="0" x2="1" y1="0" y2="0"><stop offset="0" stop-color="#0A246A"/><stop offset="1" stop-color="#A6CAF0"/></linearGradient></defs>
<rect x="640" y="182" width="240" height="18" fill="url(#gd)" />
<path d="M647 187 L656 187 L652 196 L643 196 Z" fill="#A00000"/><path d="M648.5 189.5 L652.5 189.5 L650.5 193.5 L646.5 193.5 Z" fill="#1A2A8A"/>
<text x="660" y="195" fill="#FFFFFF" text-anchor="start" style='font-family:"Liberation Sans",sans-serif;font-weight:bold;font-size:11px;letter-spacing:0.3px'>V(onoise)</text>
<rect x="862" y="184" width="16" height="14" fill="#D4D0C8" />
<rect x="862" y="197" width="16" height="1" fill="#404040" />
<rect x="877" y="184" width="1" height="14" fill="#404040" />
<rect x="863" y="196" width="14" height="1" fill="#808080" />
<rect x="876" y="185" width="1" height="12" fill="#808080" />
<rect x="862" y="184" width="15" height="1" fill="#FFFFFF" />
<rect x="862" y="184" width="1" height="13" fill="#FFFFFF" />
<rect x="866" y="187" width="2" height="1" fill="#000" />
<rect x="872" y="187" width="2" height="1" fill="#000" />
<rect x="867" y="188" width="2" height="1" fill="#000" />
<rect x="871" y="188" width="2" height="1" fill="#000" />
<rect x="868" y="189" width="2" height="1" fill="#000" />
<rect x="870" y="189" width="2" height="1" fill="#000" />
<rect x="869" y="190" width="2" height="1" fill="#000" />
<rect x="869" y="190" width="2" height="1" fill="#000" />
<rect x="870" y="191" width="2" height="1" fill="#000" />
<rect x="868" y="191" width="2" height="1" fill="#000" />
<rect x="871" y="192" width="2" height="1" fill="#000" />
<rect x="867" y="192" width="2" height="1" fill="#000" />
<rect x="872" y="193" width="2" height="1" fill="#000" />
<rect x="866" y="193" width="2" height="1" fill="#000" />
<rect x="763" y="208" width="107" height="20" fill="#D4D0C8" />
<rect x="763" y="208" width="107" height="1" fill="#808080" />
<rect x="763" y="208" width="1" height="20" fill="#808080" />
<rect x="764" y="209" width="105" height="1" fill="#404040" />
<rect x="764" y="209" width="1" height="18" fill="#404040" />
<rect x="763" y="227" width="107" height="1" fill="#FFFFFF" />
<rect x="869" y="208" width="1" height="20" fill="#FFFFFF" />
<text x="767" y="222" fill="#000" text-anchor="start" style='font-family:"Liberation Sans",sans-serif;font-weight:normal;font-size:11px;'>10Hz</text>
<rect x="763" y="232" width="107" height="20" fill="#D4D0C8" />
<rect x="763" y="232" width="107" height="1" fill="#808080" />
<rect x="763" y="232" width="1" height="20" fill="#808080" />
<rect x="764" y="233" width="105" height="1" fill="#404040" />
<rect x="764" y="233" width="1" height="18" fill="#404040" />
<rect x="763" y="251" width="107" height="1" fill="#FFFFFF" />
<rect x="869" y="232" width="1" height="20" fill="#FFFFFF" />
<text x="767" y="246" fill="#000" text-anchor="start" style='font-family:"Liberation Sans",sans-serif;font-weight:normal;font-size:11px;'>10KHz</text>
<rect x="763" y="256" width="107" height="20" fill="#D4D0C8" />
<rect x="763" y="256" width="107" height="1" fill="#808080" />
<rect x="763" y="256" width="1" height="20" fill="#808080" />
<rect x="764" y="257" width="105" height="1" fill="#404040" />
<rect x="764" y="257" width="1" height="18" fill="#404040" />
<rect x="763" y="275" width="107" height="1" fill="#FFFFFF" />
<rect x="869" y="256" width="1" height="20" fill="#FFFFFF" />
<text x="767" y="270" fill="#000" text-anchor="start" style='font-family:"Liberation Sans",sans-serif;font-weight:normal;font-size:11px;'>3.4219mV</text>
<rect x="766" y="260" width="1" height="12" fill="#000"/>
<text x="757" y="222" fill="#000" text-anchor="end" style='font-family:"Liberation Sans",sans-serif;font-weight:normal;font-size:11px;letter-spacing:-0.15px'>Interval Start:</text>
<text x="757" y="246" fill="#000" text-anchor="end" style='font-family:"Liberation Sans",sans-serif;font-weight:normal;font-size:11px;letter-spacing:-0.15px'>Interval End:</text>
<text x="757" y="270" fill="#000" text-anchor="end" style='font-family:"Liberation Sans",sans-serif;font-weight:normal;font-size:11px;letter-spacing:-0.15px'>Total RMS noise:</text>
<circle cx="64.5" cy="623.5" r="13.5" fill="none" stroke="#0A0A88" stroke-width="1.1" shape-rendering="auto"/>
<circle cx="64.5" cy="685.5" r="13.5" fill="none" stroke="#0A0A88" stroke-width="1.1" shape-rendering="auto"/>
<circle cx="1011.5" cy="470.5" r="13.5" fill="none" stroke="#0A0A88" stroke-width="1.1" shape-rendering="auto"/>
<path d="M64.5 610.5 L64.5 593.5 L101.5 593.5 M101.5 593.5 L105.0 586.5 L112.0 600.5 L119.0 586.5 L126.0 600.5 L128.5 593.5 M128.5 593.5 L194.5 593.5 M194.50 593.50 L194.75 592.59 L195.07 591.69 L195.46 590.82 L195.92 590.00 L196.43 589.24 L197.01 588.55 L197.63 587.95 L198.30 587.44 L199.01 587.03 L199.74 586.74 L200.49 586.56 L201.25 586.50 L202.01 586.56 L202.76 586.74 L203.49 587.03 L204.20 587.44 L204.87 587.95 L205.49 588.55 L206.07 589.24 L206.58 590.00 L207.04 590.82 L207.43 591.69 L207.75 592.59 L208.00 593.50 L208.18 594.15 L208.28 594.79 L208.32 595.41 L208.29 596.00 L208.20 596.54 L208.05 597.04 L207.86 597.47 L207.61 597.83 L207.34 598.12 L207.03 598.33 L206.71 598.46 L206.38 598.50 L206.04 598.46 L205.72 598.33 L205.41 598.12 L205.14 597.83 L204.89 597.47 L204.70 597.04 L204.55 596.54 L204.46 596.00 L204.43 595.41 L204.47 594.79 L204.57 594.15 L204.75 593.50 L205.00 592.59 L205.32 591.69 L205.71 590.82 L206.17 590.00 L206.68 589.24 L207.26 588.55 L207.88 587.95 L208.55 587.44 L209.26 587.03 L209.99 586.74 L210.74 586.56 L211.50 586.50 L212.26 586.56 L213.01 586.74 L213.74 587.03 L214.45 587.44 L215.12 587.95 L215.74 588.55 L216.32 589.24 L216.83 590.00 L217.29 590.82 L217.68 591.69 L218.00 592.59 L218.25 593.50 L218.43 594.15 L218.53 594.79 L218.57 595.41 L218.54 596.00 L218.45 596.54 L218.30 597.04 L218.11 597.47 L217.86 597.83 L217.59 598.12 L217.28 598.33 L216.96 598.46 L216.62 598.50 L216.29 598.46 L215.97 598.33 L215.66 598.12 L215.39 597.83 L215.14 597.47 L214.95 597.04 L214.80 596.54 L214.71 596.00 L214.68 595.41 L214.72 594.79 L214.82 594.15 L215.00 593.50 L215.25 592.59 L215.57 591.69 L215.96 590.82 L216.42 590.00 L216.93 589.24 L217.51 588.55 L218.13 587.95 L218.80 587.44 L219.51 587.03 L220.24 586.74 L220.99 586.56 L221.75 586.50 L222.51 586.56 L223.26 586.74 L223.99 587.03 L224.70 587.44 L225.37 587.95 L225.99 588.55 L226.57 589.24 L227.08 590.00 L227.54 590.82 L227.93 591.69 L228.25 592.59 L228.50 593.50 M228.5 593.5 L296.5 593.5 L296.5 632.5 M173.5 593.5 L173.5 687.5 M166.5 687.5 L180.5 687.5 M166.5 691.5 L180.5 691.5 M173.5 691.5 L173.5 723.5 M165.5 723.5 L181.5 723.5 L173.5 731.5 L165.5 723.5 M173.5 641.5 L206.5 641.5 M206.5 634.5 L206.5 648.5 M209.5 634.5 L209.5 648.5 M209.5 641.5 L248.5 641.5 M248.5 593.5 L248.5 687.5 M241.5 687.5 L255.5 687.5 M241.5 691.5 L255.5 691.5 M248.5 691.5 L248.5 723.5 M240.5 723.5 L256.5 723.5 L248.5 731.5 L240.5 723.5 M60.5 615.5 L67.5 615.5 M64.5 612.5 L64.5 619.5 M60.5 632.5 L67.5 632.5 M64.5 637.5 L64.5 671.5 M60.5 677.5 L67.5 677.5 M64.5 674.5 L64.5 681.5 M60.5 694.5 L67.5 694.5 M64.5 699.5 L64.5 723.5 M56.5 723.5 L72.5 723.5 L64.5 731.5 L56.5 723.5 M296.5 631.5 L303.5 635.0 L289.5 642.0 L303.5 649.0 L289.5 656.0 L296.5 658.5 M296.5 658.5 L296.5 680.5 M296.5 680.5 L303.5 684.0 L289.5 691.0 L303.5 698.0 L289.5 705.0 L296.5 707.5 M296.5 707.5 L296.5 723.5 M288.5 723.5 L304.5 723.5 L296.5 731.5 L288.5 723.5 M296.5 668.5 L349.5 668.5 M349.5 661.5 L349.5 675.5 M352.5 661.5 L352.5 675.5 M352.5 668.5 L460.5 668.5 M426.5 668.5 L426.5 644.5 M426.5 617.5 L419.5 621.0 L433.5 628.0 L419.5 635.0 L433.5 642.0 L426.5 644.5 M426.5 617.5 L426.5 600.5 L481.5 600.5 M460.5 654.5 L460.5 682.5 M460.5 661.5 L481.5 648.5 M460.5 675.5 L481.5 689.5 M481.5 689.5 L470.8 685.7 L473.9 681.1 Z M481.5 648.5 L481.5 584.5 M481.5 557.5 L474.5 561.0 L488.5 568.0 L474.5 575.0 L488.5 582.0 L481.5 584.5 M481.5 557.5 L481.5 521.5 M481.5 494.5 L488.5 498.0 L474.5 505.0 L488.5 512.0 L474.5 519.0 L481.5 521.5 M481.5 494.5 L481.5 470.5 M481.5 689.5 L481.5 723.5 M473.5 723.5 L489.5 723.5 L481.5 731.5 L473.5 723.5 M481.5 538.5 L515.5 538.5 L515.5 668.5 L555.5 668.5 M555.5 661.5 L555.5 675.5 M558.5 661.5 L558.5 675.5 M558.5 668.5 L645.5 668.5 M515.5 593.5 L555.5 593.5 M555.5 586.5 L555.5 600.5 M558.5 586.5 L558.5 600.5 M558.5 593.5 L689.5 593.5 M689.5 593.5 L693.0 586.5 L700.0 600.5 L707.0 586.5 L714.0 600.5 L716.5 593.5 M597.5 593.5 L597.5 617.5 M597.5 617.5 L590.5 621.0 L604.5 628.0 L590.5 635.0 L604.5 642.0 L597.5 644.5 M597.5 643.5 L597.5 668.5 M645.5 654.5 L645.5 682.5 M645.5 661.5 L666.5 648.5 M645.5 675.5 L666.5 689.5 M666.5 689.5 L655.8 685.7 L658.9 681.1 Z M666.5 648.5 L666.5 549.5 M666.5 522.5 L659.5 526.0 L673.5 533.0 L659.5 540.0 L673.5 547.0 L666.5 549.5 M666.5 522.5 L666.5 470.5 M666.5 689.5 L666.5 723.5 M658.5 723.5 L674.5 723.5 L666.5 731.5 L658.5 723.5 M412.5 470.5 L420.5 462.5 L420.5 478.5 L412.5 470.5 M420.5 470.5 L445.5 470.5 M445.5 463.5 L445.5 477.5 M448.5 463.5 L448.5 477.5 M448.5 470.5 L723.5 470.5 M723.5 470.5 L727.0 463.5 L734.0 477.5 L741.0 463.5 L748.0 477.5 L750.5 470.5 M750.5 470.5 L997.5 470.5 M999.5 470.5 L1006.5 470.5 M1003.5 467.5 L1003.5 473.5 M1020.5 466.5 L1020.5 473.5 M1024.5 470.5 L1042.5 470.5 M1042.5 462.5 L1050.5 470.5 L1042.5 478.5 L1042.5 462.5 M716.5 593.5 L746.5 593.5 M746.5 586.5 L746.5 600.5 M749.5 586.5 L749.5 600.5 M749.5 593.5 L799.5 593.5 M799.5 593.5 L803.0 586.5 L810.0 600.5 L817.0 586.5 L824.0 600.5 L826.5 593.5 M826.5 593.5 L967.5 593.5 L967.5 568.5 M775.5 593.5 L775.5 693.5 M775.5 693.5 L782.5 697.0 L768.5 704.0 L782.5 711.0 L768.5 718.0 L775.5 720.5 M775.5 720.5 L775.5 723.5 M767.5 723.5 L783.5 723.5 L775.5 731.5 L767.5 723.5 M775.5 682.5 L830.5 682.5 M830.5 668.5 L830.5 696.5 M830.5 675.5 L850.5 662.5 M830.5 689.5 L850.5 703.5 M850.5 703.5 L839.9 699.5 L843.1 694.9 Z M850.5 702.5 L850.5 723.5 M842.5 723.5 L858.5 723.5 L850.5 731.5 L842.5 723.5 M850.5 504.5 L891.5 504.5 M850.5 504.5 L850.5 567.5 M843.5 567.5 L857.5 567.5 L850.5 578.5 L843.5 567.5 M843.5 578.5 L857.5 578.5 M850.5 578.5 L850.5 615.5 M843.5 615.5 L857.5 615.5 L850.5 626.5 L843.5 615.5 M843.5 626.5 L857.5 626.5 M850.5 626.5 L850.5 662.5 L891.5 662.5 M891.5 490.5 L891.5 518.5 M891.5 497.5 L912.5 484.5 M891.5 511.5 L912.5 525.5 M912.5 525.5 L901.8 521.7 L904.9 517.1 Z M912.5 484.5 L912.5 470.5 M912.5 524.5 L912.5 556.5 M912.5 556.5 L919.5 560.0 L905.5 567.0 L919.5 574.0 L905.5 581.0 L912.5 583.5 M912.5 583.5 L912.5 606.5 M912.5 606.5 L919.5 610.0 L905.5 617.0 L919.5 624.0 L905.5 631.0 L912.5 633.5 M912.5 633.5 L912.5 642.5 M891.5 648.5 L891.5 676.5 M891.5 655.5 L912.5 642.5 M891.5 669.5 L912.5 683.5 M892.5 655.5 L900.4 647.3 L903.3 652.1 Z M912.5 682.5 L912.5 723.5 M904.5 723.5 L920.5 723.5 L912.5 731.5 L904.5 723.5 M850.5 538.5 L868.5 538.5 M868.5 538.5 L872.0 531.5 L879.0 545.5 L886.0 531.5 L893.0 545.5 L895.5 538.5 M895.5 538.5 L967.5 538.5 M967.5 470.5 L967.5 486.5 M967.5 486.5 L974.5 490.0 L960.5 497.0 L974.5 504.0 L960.5 511.0 L967.5 513.5 M967.5 513.5 L967.5 564.5 M960.5 564.5 L974.5 564.5 M960.5 568.5 L974.5 568.5" stroke="#0A0A88" stroke-width="1.1" fill="none" shape-rendering="auto" stroke-linecap="square"/>
<rect x="171" y="591" width="5" height="5" fill="#0000F0"/>
<rect x="246" y="591" width="5" height="5" fill="#0000F0"/>
<rect x="171" y="639" width="5" height="5" fill="#0000F0"/>
<rect x="246" y="639" width="5" height="5" fill="#0000F0"/>
<rect x="294" y="666" width="5" height="5" fill="#0000F0"/>
<rect x="424" y="666" width="5" height="5" fill="#0000F0"/>
<rect x="479" y="598" width="5" height="5" fill="#0000F0"/>
<rect x="479" y="536" width="5" height="5" fill="#0000F0"/>
<rect x="479" y="468" width="5" height="5" fill="#0000F0"/>
<rect x="513" y="591" width="5" height="5" fill="#0000F0"/>
<rect x="595" y="591" width="5" height="5" fill="#0000F0"/>
<rect x="595" y="666" width="5" height="5" fill="#0000F0"/>
<rect x="664" y="591" width="5" height="5" fill="#0000F0"/>
<rect x="664" y="468" width="5" height="5" fill="#0000F0"/>
<rect x="773" y="591" width="5" height="5" fill="#0000F0"/>
<rect x="773" y="680" width="5" height="5" fill="#0000F0"/>
<rect x="848" y="536" width="5" height="5" fill="#0000F0"/>
<rect x="848" y="660" width="5" height="5" fill="#0000F0"/>
<rect x="910" y="468" width="5" height="5" fill="#0000F0"/>
<rect x="910" y="591" width="5" height="5" fill="#0000F0"/>
<rect x="965" y="468" width="5" height="5" fill="#0000F0"/>
<rect x="965" y="536" width="5" height="5" fill="#0000F0"/>
<text x="0" y="0" transform="translate(35.7,477) scale(1.12,1)" textLength="90.4" lengthAdjust="spacingAndGlyphs" fill="#000" stroke="#000" stroke-width="0.4" style='font-family:"Liberation Sans",sans-serif;font-weight:bold;font-size:9.5px' shape-rendering="auto">;tran 0 500m 0 10u</text>
<text x="0" y="0" transform="translate(35.7,494) scale(1.12,1)" textLength="80.3" lengthAdjust="spacingAndGlyphs" fill="#000" stroke="#000" stroke-width="0.4" style='font-family:"Liberation Sans",sans-serif;font-weight:bold;font-size:9.5px' shape-rendering="auto">.ac dec 1k 10 10k</text>
<text x="0" y="0" transform="translate(35.7,511) scale(1.12,1)" textLength="142.7" lengthAdjust="spacingAndGlyphs" fill="#000" stroke="#000" stroke-width="0.4" style='font-family:"Liberation Sans",sans-serif;font-weight:bold;font-size:9.5px' shape-rendering="auto">;noise v(lsp) v1 oct 100 10 10k</text>
<text x="0" y="0" transform="translate(70.0,591) scale(1.12,1)" textLength="12.9" lengthAdjust="spacingAndGlyphs" fill="#000" stroke="#000" stroke-width="0.4" style='font-family:"Liberation Sans",sans-serif;font-weight:bold;font-size:9.5px' shape-rendering="auto">src</text>
<text x="0" y="0" transform="translate(104.6,584) scale(1.12,1)" textLength="15.4" lengthAdjust="spacingAndGlyphs" fill="#000" stroke="#000" stroke-width="0.4" style='font-family:"Liberation Sans",sans-serif;font-weight:bold;font-size:9.5px' shape-rendering="auto">R5</text>
<text x="0" y="0" transform="translate(103.8,608) scale(1.12,1)" textLength="18.3" lengthAdjust="spacingAndGlyphs" fill="#000" stroke="#000" stroke-width="0.4" style='font-family:"Liberation Sans",sans-serif;font-weight:bold;font-size:9.5px' shape-rendering="auto">100</text>
<text x="0" y="0" transform="translate(143.2,590) scale(1.12,1)" textLength="16.3" lengthAdjust="spacingAndGlyphs" fill="#000" stroke="#000" stroke-width="0.4" style='font-family:"Liberation Sans",sans-serif;font-weight:bold;font-size:9.5px' shape-rendering="auto">mix</text>
<text x="0" y="0" transform="translate(203.1,584) scale(1.12,1)" textLength="10.9" lengthAdjust="spacingAndGlyphs" fill="#000" stroke="#000" stroke-width="0.4" style='font-family:"Liberation Sans",sans-serif;font-weight:bold;font-size:9.5px' shape-rendering="auto">L1</text>
<text x="0" y="0" transform="translate(198.8,606.5) scale(1.12,1)" textLength="20.4" lengthAdjust="spacingAndGlyphs" fill="#000" stroke="#000" stroke-width="0.4" style='font-family:"Liberation Sans",sans-serif;font-weight:bold;font-size:9.5px' shape-rendering="auto">33m</text>
<text x="0" y="0" transform="translate(29.5,631.8) scale(1.12,1)" textLength="12.5" lengthAdjust="spacingAndGlyphs" fill="#000" stroke="#000" stroke-width="0.4" style='font-family:"Liberation Sans",sans-serif;font-weight:bold;font-size:9.5px' shape-rendering="auto">V1</text>
<text x="0" y="0" transform="translate(22.4,648.2) scale(1.12,1)" textLength="85.4" lengthAdjust="spacingAndGlyphs" fill="#000" stroke="#000" stroke-width="0.4" style='font-family:"Liberation Sans",sans-serif;font-weight:bold;font-size:9.5px' shape-rendering="auto">SINE(0 100u 600)</text>
<text x="0" y="0" transform="translate(28.7,660.9) scale(1.12,1)" textLength="21.1" lengthAdjust="spacingAndGlyphs" fill="#000" stroke="#000" stroke-width="0.4" style='font-family:"Liberation Sans",sans-serif;font-weight:bold;font-size:9.5px' shape-rendering="auto">AC 1</text>
<text x="0" y="0" transform="translate(31.3,692.5) scale(1.12,1)" textLength="13.1" lengthAdjust="spacingAndGlyphs" fill="#000" stroke="#000" stroke-width="0.4" style='font-family:"Liberation Sans",sans-serif;font-weight:bold;font-size:9.5px' shape-rendering="auto">V2</text>
<text x="0" y="0" transform="translate(21.9,708.9) scale(1.12,1)" textLength="84.6" lengthAdjust="spacingAndGlyphs" fill="#000" stroke="#000" stroke-width="0.4" style='font-family:"Liberation Sans",sans-serif;font-weight:bold;font-size:9.5px' shape-rendering="auto">SINE(0 100u 700)</text>
<text x="0" y="0" transform="translate(199.3,631.8) scale(1.12,1)" textLength="13.1" lengthAdjust="spacingAndGlyphs" fill="#000" stroke="#000" stroke-width="0.4" style='font-family:"Liberation Sans",sans-serif;font-weight:bold;font-size:9.5px' shape-rendering="auto">C9</text>
<text x="0" y="0" transform="translate(192.9,656.6) scale(1.12,1)" textLength="23.8" lengthAdjust="spacingAndGlyphs" fill="#000" stroke="#000" stroke-width="0.4" style='font-family:"Liberation Sans",sans-serif;font-weight:bold;font-size:9.5px' shape-rendering="auto">220n</text>
<text x="0" y="0" transform="translate(176.4,682.6) scale(1.12,1)" textLength="11.7" lengthAdjust="spacingAndGlyphs" fill="#000" stroke="#000" stroke-width="0.4" style='font-family:"Liberation Sans",sans-serif;font-weight:bold;font-size:9.5px' shape-rendering="auto">C1</text>
<text x="0" y="0" transform="translate(176.4,702.4) scale(1.12,1)" textLength="12.1" lengthAdjust="spacingAndGlyphs" fill="#000" stroke="#000" stroke-width="0.4" style='font-family:"Liberation Sans",sans-serif;font-weight:bold;font-size:9.5px' shape-rendering="auto">2µ</text>
<text x="0" y="0" transform="translate(230.7,682.6) scale(1.12,1)" textLength="12.0" lengthAdjust="spacingAndGlyphs" fill="#000" stroke="#000" stroke-width="0.4" style='font-family:"Liberation Sans",sans-serif;font-weight:bold;font-size:9.5px' shape-rendering="auto">C2</text>
<text x="0" y="0" transform="translate(231.7,702.4) scale(1.12,1)" textLength="11.4" lengthAdjust="spacingAndGlyphs" fill="#000" stroke="#000" stroke-width="0.4" style='font-family:"Liberation Sans",sans-serif;font-weight:bold;font-size:9.5px' shape-rendering="auto">2µ</text>
<text x="0" y="0" transform="translate(439.7,460.7) scale(1.12,1)" textLength="12.6" lengthAdjust="spacingAndGlyphs" fill="#000" stroke="#000" stroke-width="0.4" style='font-family:"Liberation Sans",sans-serif;font-weight:bold;font-size:9.5px' shape-rendering="auto">C6</text>
<text x="0" y="0" transform="translate(433.6,486) scale(1.12,1)" textLength="23.7" lengthAdjust="spacingAndGlyphs" fill="#000" stroke="#000" stroke-width="0.4" style='font-family:"Liberation Sans",sans-serif;font-weight:bold;font-size:9.5px' shape-rendering="auto">100µ</text>
<text x="0" y="0" transform="translate(489.7,505.2) scale(1.12,1)" textLength="18.7" lengthAdjust="spacingAndGlyphs" fill="#000" stroke="#000" stroke-width="0.4" style='font-family:"Liberation Sans",sans-serif;font-weight:bold;font-size:9.5px' shape-rendering="auto">R13</text>
<text x="0" y="0" transform="translate(489.7,519.6) scale(1.12,1)" textLength="20.5" lengthAdjust="spacingAndGlyphs" fill="#000" stroke="#000" stroke-width="0.4" style='font-family:"Liberation Sans",sans-serif;font-weight:bold;font-size:9.5px' shape-rendering="auto">3.9k</text>
<text x="0" y="0" transform="translate(450.5,565.9) scale(1.12,1)" textLength="18.7" lengthAdjust="spacingAndGlyphs" fill="#000" stroke="#000" stroke-width="0.4" style='font-family:"Liberation Sans",sans-serif;font-weight:bold;font-size:9.5px' shape-rendering="auto">R12</text>
<text x="0" y="0" transform="translate(452.3,581.5) scale(1.12,1)" textLength="17.1" lengthAdjust="spacingAndGlyphs" fill="#000" stroke="#000" stroke-width="0.4" style='font-family:"Liberation Sans",sans-serif;font-weight:bold;font-size:9.5px' shape-rendering="auto">10k</text>
<text x="0" y="0" transform="translate(435.8,598) scale(1.12,1)" textLength="6.0" lengthAdjust="spacingAndGlyphs" fill="#000" stroke="#000" stroke-width="0.4" style='font-family:"Liberation Sans",sans-serif;font-weight:bold;font-size:9.5px' shape-rendering="auto">C</text>
<text x="0" y="0" transform="translate(522.5,590.9) scale(1.12,1)" textLength="9.3" lengthAdjust="spacingAndGlyphs" fill="#000" stroke="#000" stroke-width="0.4" style='font-family:"Liberation Sans",sans-serif;font-weight:bold;font-size:9.5px' shape-rendering="auto">f1</text>
<text x="0" y="0" transform="translate(277.9,590.9) scale(1.12,1)" textLength="8.8" lengthAdjust="spacingAndGlyphs" fill="#000" stroke="#000" stroke-width="0.4" style='font-family:"Liberation Sans",sans-serif;font-weight:bold;font-size:9.5px' shape-rendering="auto">nf</text>
<text x="0" y="0" transform="translate(304.7,641.9) scale(1.12,1)" textLength="18.0" lengthAdjust="spacingAndGlyphs" fill="#000" stroke="#000" stroke-width="0.4" style='font-family:"Liberation Sans",sans-serif;font-weight:bold;font-size:9.5px' shape-rendering="auto">P1a</text>
<text x="0" y="0" transform="translate(305.2,656.3) scale(1.12,1)" textLength="4.7" lengthAdjust="spacingAndGlyphs" fill="#000" stroke="#000" stroke-width="0.4" style='font-family:"Liberation Sans",sans-serif;font-weight:bold;font-size:9.5px' shape-rendering="auto">1</text>
<text x="0" y="0" transform="translate(305.2,688.7) scale(1.12,1)" textLength="11.5" lengthAdjust="spacingAndGlyphs" fill="#000" stroke="#000" stroke-width="0.4" style='font-family:"Liberation Sans",sans-serif;font-weight:bold;font-size:9.5px' shape-rendering="auto">2k</text>
<text x="0" y="0" transform="translate(304.7,703.8) scale(1.12,1)" textLength="18.0" lengthAdjust="spacingAndGlyphs" fill="#000" stroke="#000" stroke-width="0.4" style='font-family:"Liberation Sans",sans-serif;font-weight:bold;font-size:9.5px' shape-rendering="auto">P1b</text>
<text x="0" y="0" transform="translate(343.1,659.6) scale(1.12,1)" textLength="13.1" lengthAdjust="spacingAndGlyphs" fill="#000" stroke="#000" stroke-width="0.4" style='font-family:"Liberation Sans",sans-serif;font-weight:bold;font-size:9.5px' shape-rendering="auto">C3</text>
<text x="0" y="0" transform="translate(340.6,683.6) scale(1.12,1)" textLength="17.6" lengthAdjust="spacingAndGlyphs" fill="#000" stroke="#000" stroke-width="0.4" style='font-family:"Liberation Sans",sans-serif;font-weight:bold;font-size:9.5px' shape-rendering="auto">47n</text>
<text x="0" y="0" transform="translate(401.7,665.9) scale(1.12,1)" textLength="6.6" lengthAdjust="spacingAndGlyphs" fill="#000" stroke="#000" stroke-width="0.4" style='font-family:"Liberation Sans",sans-serif;font-weight:bold;font-size:9.5px' shape-rendering="auto">B</text>
<text x="0" y="0" transform="translate(403.7,628) scale(1.12,1)" textLength="12.5" lengthAdjust="spacingAndGlyphs" fill="#000" stroke="#000" stroke-width="0.4" style='font-family:"Liberation Sans",sans-serif;font-weight:bold;font-size:9.5px' shape-rendering="auto">R3</text>
<text x="0" y="0" transform="translate(379.7,643.2) scale(1.12,1)" textLength="33.9" lengthAdjust="spacingAndGlyphs" fill="#000" stroke="#000" stroke-width="0.4" style='font-family:"Liberation Sans",sans-serif;font-weight:bold;font-size:9.5px' shape-rendering="auto">3.3Meg</text>
<text x="0" y="0" transform="translate(728.4,460.7) scale(1.12,1)" textLength="13.6" lengthAdjust="spacingAndGlyphs" fill="#000" stroke="#000" stroke-width="0.4" style='font-family:"Liberation Sans",sans-serif;font-weight:bold;font-size:9.5px' shape-rendering="auto">R8</text>
<text x="0" y="0" transform="translate(725.4,486) scale(1.12,1)" textLength="18.5" lengthAdjust="spacingAndGlyphs" fill="#000" stroke="#000" stroke-width="0.4" style='font-family:"Liberation Sans",sans-serif;font-weight:bold;font-size:9.5px' shape-rendering="auto">220</text>
<text x="0" y="0" transform="translate(642.5,531.5) scale(1.12,1)" textLength="12.7" lengthAdjust="spacingAndGlyphs" fill="#000" stroke="#000" stroke-width="0.4" style='font-family:"Liberation Sans",sans-serif;font-weight:bold;font-size:9.5px' shape-rendering="auto">R6</text>
<text x="0" y="0" transform="translate(633.6,546.6) scale(1.12,1)" textLength="20.6" lengthAdjust="spacingAndGlyphs" fill="#000" stroke="#000" stroke-width="0.4" style='font-family:"Liberation Sans",sans-serif;font-weight:bold;font-size:9.5px' shape-rendering="auto">3.3k</text>
<text x="0" y="0" transform="translate(544.7,584) scale(1.12,1)" textLength="18.0" lengthAdjust="spacingAndGlyphs" fill="#000" stroke="#000" stroke-width="0.4" style='font-family:"Liberation Sans",sans-serif;font-weight:bold;font-size:9.5px' shape-rendering="auto">C11</text>
<text x="0" y="0" transform="translate(546.5,608.8) scale(1.12,1)" textLength="17.1" lengthAdjust="spacingAndGlyphs" fill="#000" stroke="#000" stroke-width="0.4" style='font-family:"Liberation Sans",sans-serif;font-weight:bold;font-size:9.5px' shape-rendering="auto">10n</text>
<text x="0" y="0" transform="translate(638.7,590.9) scale(1.12,1)" textLength="9.7" lengthAdjust="spacingAndGlyphs" fill="#000" stroke="#000" stroke-width="0.4" style='font-family:"Liberation Sans",sans-serif;font-weight:bold;font-size:9.5px' shape-rendering="auto">f2</text>
<text x="0" y="0" transform="translate(695.6,584) scale(1.12,1)" textLength="12.6" lengthAdjust="spacingAndGlyphs" fill="#000" stroke="#000" stroke-width="0.4" style='font-family:"Liberation Sans",sans-serif;font-weight:bold;font-size:9.5px' shape-rendering="auto">R4</text>
<text x="0" y="0" transform="translate(696.3,608.8) scale(1.12,1)" textLength="10.6" lengthAdjust="spacingAndGlyphs" fill="#000" stroke="#000" stroke-width="0.4" style='font-family:"Liberation Sans",sans-serif;font-weight:bold;font-size:9.5px' shape-rendering="auto">1k</text>
<text x="0" y="0" transform="translate(740.3,584) scale(1.12,1)" textLength="12.7" lengthAdjust="spacingAndGlyphs" fill="#000" stroke="#000" stroke-width="0.4" style='font-family:"Liberation Sans",sans-serif;font-weight:bold;font-size:9.5px' shape-rendering="auto">C7</text>
<text x="0" y="0" transform="translate(741.0,608.8) scale(1.12,1)" textLength="10.9" lengthAdjust="spacingAndGlyphs" fill="#000" stroke="#000" stroke-width="0.4" style='font-family:"Liberation Sans",sans-serif;font-weight:bold;font-size:9.5px' shape-rendering="auto">1µ</text>
<text x="0" y="0" transform="translate(574.7,621.7) scale(1.12,1)" textLength="12.8" lengthAdjust="spacingAndGlyphs" fill="#000" stroke="#000" stroke-width="0.4" style='font-family:"Liberation Sans",sans-serif;font-weight:bold;font-size:9.5px' shape-rendering="auto">R7</text>
<text x="0" y="0" transform="translate(561.6,636.1) scale(1.12,1)" textLength="24.5" lengthAdjust="spacingAndGlyphs" fill="#000" stroke="#000" stroke-width="0.4" style='font-family:"Liberation Sans",sans-serif;font-weight:bold;font-size:9.5px' shape-rendering="auto">220k</text>
<text x="0" y="0" transform="translate(620.5,639.9) scale(1.12,1)" textLength="37.2" lengthAdjust="spacingAndGlyphs" fill="#000" stroke="#000" stroke-width="0.4" style='font-family:"Liberation Sans",sans-serif;font-weight:bold;font-size:9.5px' shape-rendering="auto">BC547C</text>
<text x="0" y="0" transform="translate(623.5,656.3) scale(1.12,1)" textLength="13.8" lengthAdjust="spacingAndGlyphs" fill="#000" stroke="#000" stroke-width="0.4" style='font-family:"Liberation Sans",sans-serif;font-weight:bold;font-size:9.5px' shape-rendering="auto">Q2</text>
<text x="0" y="0" transform="translate(544.7,660.4) scale(1.12,1)" textLength="18.8" lengthAdjust="spacingAndGlyphs" fill="#000" stroke="#000" stroke-width="0.4" style='font-family:"Liberation Sans",sans-serif;font-weight:bold;font-size:9.5px' shape-rendering="auto">C12</text>
<text x="0" y="0" transform="translate(546.5,683.6) scale(1.12,1)" textLength="17.1" lengthAdjust="spacingAndGlyphs" fill="#000" stroke="#000" stroke-width="0.4" style='font-family:"Liberation Sans",sans-serif;font-weight:bold;font-size:9.5px' shape-rendering="auto">10n</text>
<text x="0" y="0" transform="translate(846.5,486.7) scale(1.12,1)" textLength="47.4" lengthAdjust="spacingAndGlyphs" fill="#000" stroke="#000" stroke-width="0.4" style='font-family:"Liberation Sans",sans-serif;font-weight:bold;font-size:9.5px' shape-rendering="auto">BC337-40</text>
<text x="0" y="0" transform="translate(866.5,497.5) scale(1.12,1)" textLength="13.2" lengthAdjust="spacingAndGlyphs" fill="#000" stroke="#000" stroke-width="0.4" style='font-family:"Liberation Sans",sans-serif;font-weight:bold;font-size:9.5px' shape-rendering="auto">Q4</text>
<text x="0" y="0" transform="translate(873.5,528.2) scale(1.12,1)" textLength="12.8" lengthAdjust="spacingAndGlyphs" fill="#000" stroke="#000" stroke-width="0.4" style='font-family:"Liberation Sans",sans-serif;font-weight:bold;font-size:9.5px' shape-rendering="auto">R2</text>
<text x="0" y="0" transform="translate(869.4,553.1) scale(1.12,1)" textLength="18.7" lengthAdjust="spacingAndGlyphs" fill="#000" stroke="#000" stroke-width="0.4" style='font-family:"Liberation Sans",sans-serif;font-weight:bold;font-size:9.5px' shape-rendering="auto">680</text>
<text x="0" y="0" transform="translate(938.2,533.5) scale(1.12,1)" textLength="12.6" lengthAdjust="spacingAndGlyphs" fill="#000" stroke="#000" stroke-width="0.4" style='font-family:"Liberation Sans",sans-serif;font-weight:bold;font-size:9.5px' shape-rendering="auto">lsp</text>
<text x="0" y="0" transform="translate(919.3,565.7) scale(1.12,1)" textLength="12.0" lengthAdjust="spacingAndGlyphs" fill="#000" stroke="#000" stroke-width="0.4" style='font-family:"Liberation Sans",sans-serif;font-weight:bold;font-size:9.5px' shape-rendering="auto">R1</text>
<text x="0" y="0" transform="translate(919.3,581.8) scale(1.12,1)" textLength="15.4" lengthAdjust="spacingAndGlyphs" fill="#000" stroke="#000" stroke-width="0.4" style='font-family:"Liberation Sans",sans-serif;font-weight:bold;font-size:9.5px' shape-rendering="auto">2.2</text>
<text x="0" y="0" transform="translate(969.3,558.7) scale(1.12,1)" textLength="12.7" lengthAdjust="spacingAndGlyphs" fill="#000" stroke="#000" stroke-width="0.4" style='font-family:"Liberation Sans",sans-serif;font-weight:bold;font-size:9.5px' shape-rendering="auto">C5</text>
<text x="0" y="0" transform="translate(970.0,579.5) scale(1.12,1)" textLength="23.9" lengthAdjust="spacingAndGlyphs" fill="#000" stroke="#000" stroke-width="0.4" style='font-family:"Liberation Sans",sans-serif;font-weight:bold;font-size:9.5px' shape-rendering="auto">100µ</text>
<text x="0" y="0" transform="translate(853.6,562.9) scale(1.12,1)" textLength="11.5" lengthAdjust="spacingAndGlyphs" fill="#000" stroke="#000" stroke-width="0.4" style='font-family:"Liberation Sans",sans-serif;font-weight:bold;font-size:9.5px' shape-rendering="auto">D1</text>
<text x="0" y="0" transform="translate(858.5,578.3) scale(1.12,1)" textLength="36.7" lengthAdjust="spacingAndGlyphs" fill="#000" stroke="#000" stroke-width="0.4" style='font-family:"Liberation Sans",sans-serif;font-weight:bold;font-size:9.5px' shape-rendering="auto">1N4148</text>
<text x="0" y="0" transform="translate(973.2,513.3) scale(1.12,1)" textLength="27.9" lengthAdjust="spacingAndGlyphs" fill="#000" stroke="#000" stroke-width="0.4" style='font-family:"Liberation Sans",sans-serif;font-weight:bold;font-size:9.5px' shape-rendering="auto">R-Lsp.</text>
<text x="0" y="0" transform="translate(975.0,525.2) scale(1.12,1)" textLength="5.3" lengthAdjust="spacingAndGlyphs" fill="#000" stroke="#000" stroke-width="0.4" style='font-family:"Liberation Sans",sans-serif;font-weight:bold;font-size:9.5px' shape-rendering="auto">8</text>
<text x="0" y="0" transform="translate(1003.6,453.9) scale(1.12,1)" textLength="12.0" lengthAdjust="spacingAndGlyphs" fill="#000" stroke="#000" stroke-width="0.4" style='font-family:"Liberation Sans",sans-serif;font-weight:bold;font-size:9.5px' shape-rendering="auto">V6</text>
<text x="0" y="0" transform="translate(1004.3,492.6) scale(1.12,1)" textLength="11.3" lengthAdjust="spacingAndGlyphs" fill="#000" stroke="#000" stroke-width="0.4" style='font-family:"Liberation Sans",sans-serif;font-weight:bold;font-size:9.5px' shape-rendering="auto">12</text>
<text x="0" y="0" transform="translate(801.4,584) scale(1.12,1)" textLength="18.7" lengthAdjust="spacingAndGlyphs" fill="#000" stroke="#000" stroke-width="0.4" style='font-family:"Liberation Sans",sans-serif;font-weight:bold;font-size:9.5px' shape-rendering="auto">R10</text>
<text x="0" y="0" transform="translate(799.6,608.8) scale(1.12,1)" textLength="23.3" lengthAdjust="spacingAndGlyphs" fill="#000" stroke="#000" stroke-width="0.4" style='font-family:"Liberation Sans",sans-serif;font-weight:bold;font-size:9.5px' shape-rendering="auto">100k</text>
<text x="0" y="0" transform="translate(860.3,619.9) scale(1.12,1)" textLength="12.4" lengthAdjust="spacingAndGlyphs" fill="#000" stroke="#000" stroke-width="0.4" style='font-family:"Liberation Sans",sans-serif;font-weight:bold;font-size:9.5px' shape-rendering="auto">D2</text>
<text x="0" y="0" transform="translate(854.5,637.6) scale(1.12,1)" textLength="36.8" lengthAdjust="spacingAndGlyphs" fill="#000" stroke="#000" stroke-width="0.4" style='font-family:"Liberation Sans",sans-serif;font-weight:bold;font-size:9.5px' shape-rendering="auto">1N4148</text>
<text x="0" y="0" transform="translate(919.4,613.4) scale(1.12,1)" textLength="12.7" lengthAdjust="spacingAndGlyphs" fill="#000" stroke="#000" stroke-width="0.4" style='font-family:"Liberation Sans",sans-serif;font-weight:bold;font-size:9.5px' shape-rendering="auto">R9</text>
<text x="0" y="0" transform="translate(919.4,629.3) scale(1.12,1)" textLength="15.6" lengthAdjust="spacingAndGlyphs" fill="#000" stroke="#000" stroke-width="0.4" style='font-family:"Liberation Sans",sans-serif;font-weight:bold;font-size:9.5px' shape-rendering="auto">2.2</text>
<text x="0" y="0" transform="translate(897.4,665.9) scale(1.12,1)" textLength="47.4" lengthAdjust="spacingAndGlyphs" fill="#000" stroke="#000" stroke-width="0.4" style='font-family:"Liberation Sans",sans-serif;font-weight:bold;font-size:9.5px' shape-rendering="auto">BC327-40</text>
<text x="0" y="0" transform="translate(918.4,682.9) scale(1.12,1)" textLength="13.6" lengthAdjust="spacingAndGlyphs" fill="#000" stroke="#000" stroke-width="0.4" style='font-family:"Liberation Sans",sans-serif;font-weight:bold;font-size:9.5px' shape-rendering="auto">Q5</text>
<text x="0" y="0" transform="translate(833.5,684.9) scale(1.12,1)" textLength="37.5" lengthAdjust="spacingAndGlyphs" fill="#000" stroke="#000" stroke-width="0.4" style='font-family:"Liberation Sans",sans-serif;font-weight:bold;font-size:9.5px' shape-rendering="auto">BC547C</text>
<text x="0" y="0" transform="translate(853.7,703.1) scale(1.12,1)" textLength="13.4" lengthAdjust="spacingAndGlyphs" fill="#000" stroke="#000" stroke-width="0.4" style='font-family:"Liberation Sans",sans-serif;font-weight:bold;font-size:9.5px' shape-rendering="auto">Q3</text>
<text x="0" y="0" transform="translate(783.7,702.6) scale(1.12,1)" textLength="17.7" lengthAdjust="spacingAndGlyphs" fill="#000" stroke="#000" stroke-width="0.4" style='font-family:"Liberation Sans",sans-serif;font-weight:bold;font-size:9.5px' shape-rendering="auto">R11</text>
<text x="0" y="0" transform="translate(784.2,718.5) scale(1.12,1)" textLength="17.2" lengthAdjust="spacingAndGlyphs" fill="#000" stroke="#000" stroke-width="0.4" style='font-family:"Liberation Sans",sans-serif;font-weight:bold;font-size:9.5px' shape-rendering="auto">15k</text>
<text x="0" y="0" transform="translate(302.7,623.5) scale(1.12,1)" textLength="31.8" lengthAdjust="spacingAndGlyphs" fill="#000080" stroke="#000080" stroke-width="0.4" style='font-family:"Liberation Sans",sans-serif;font-weight:bold;font-size:9.5px' shape-rendering="auto">Poti 2k</text>
<text x="0" y="0" textLength="11.5" lengthAdjust="spacingAndGlyphs" transform="translate(478.3,676) rotate(-90)" fill="#000" stroke="#000" stroke-width="0.3" style='font-family:"Liberation Sans",sans-serif;font-weight:bold;font-size:9.5px'>Q1</text>
<text x="0" y="0" textLength="36" lengthAdjust="spacingAndGlyphs" transform="translate(495.2,697) rotate(-90)" fill="#000" stroke="#000" stroke-width="0.3" style='font-family:"Liberation Sans",sans-serif;font-weight:bold;font-size:9.5px'>BC547C</text>
</svg></body></html>
